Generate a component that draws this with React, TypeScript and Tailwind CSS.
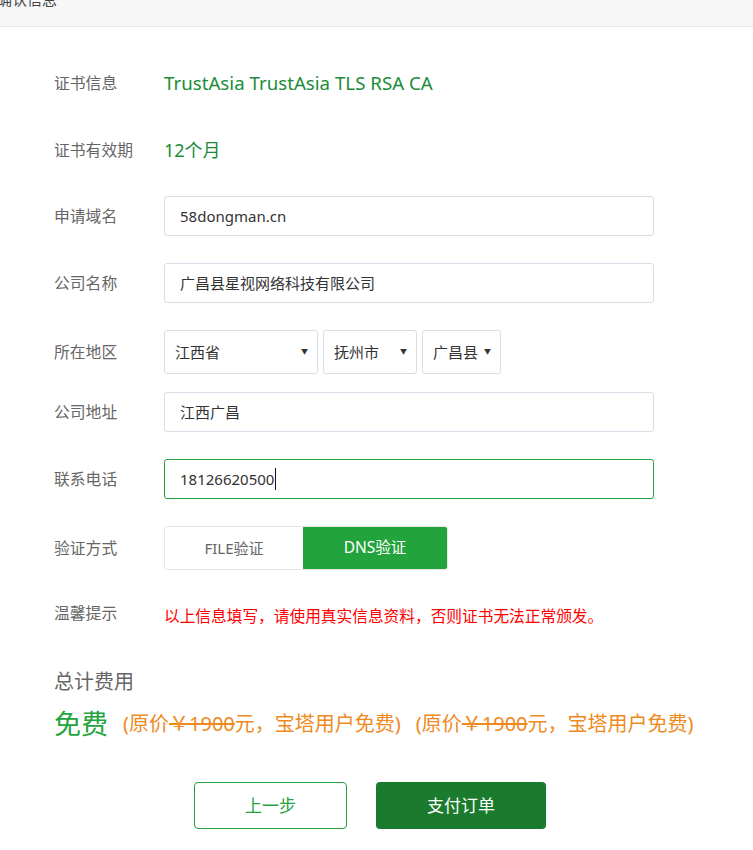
const font = "font-['Noto_Sans','Noto_Sans_CJK_SC',sans-serif]";

function Label({ children }: { children: React.ReactNode }) {
  return <div className="w-[110px] shrink-0 text-[15.8px] leading-[23px] text-[#666]">{children}</div>;
}

function Input({ value, active = false }: { value: string; active?: boolean }) {
  return (
    <div
      className={`flex h-[40px] w-[490px] items-center rounded-[3px] border px-[15px] text-[15px] text-[#333] ${
        active ? "border-[#22a33c]" : "border-[#dcdbe8]"
      }`}
    >
      <span className={active ? "border-r border-[#111] pr-px" : ""}>{value}</span>
    </div>
  );
}

function Select({ value, width }: { value: string; width: string }) {
  return (
    <div
      className={`flex h-[44px] items-center justify-between rounded-[3px] border border-[#dcdbe8] pl-[10px] pr-[9px] text-[15px] text-[#333] ${width}`}
    >
      <span>{value}</span>
      <span className="text-[7px] text-[#333]">▼</span>
    </div>
  );
}

function Price() {
  return (
    <span className="text-[20px] text-[#ee8a1e]">
      (原价<span className="line-through">￥1900</span>元，宝塔用户免费)
    </span>
  );
}

export default function App() {
  return (
    <div className={`min-h-[850px] w-[753px] bg-white ${font}`}>
      <div className="h-[27px] overflow-hidden border-b border-[#e8e8e8] bg-[#f7f7f7]">
        <div className="-ml-[3px] -mt-[11px] text-[15px] leading-[20px] text-[#444]">确认信息</div>
      </div>

      <div className="flex flex-col pl-[54px] pt-[36px]">
        <div className="flex h-[40px] items-center">
          <Label>证书信息</Label>
          <div className="text-[18.7px] text-[#208c3a]">TrustAsia TrustAsia TLS RSA CA</div>
        </div>

        <div className="mt-[27px] flex h-[40px] items-center">
          <Label>证书有效期</Label>
          <div className="text-[18px] text-[#208c3a]">12个月</div>
        </div>

        <div className="mt-[26px] flex h-[40px] items-center">
          <Label>申请域名</Label>
          <Input value="58dongman.cn" />
        </div>

        <div className="mt-[27px] flex h-[40px] items-center">
          <Label>公司名称</Label>
          <Input value="广昌县星视网络科技有限公司" />
        </div>

        <div className="mt-[27px] flex h-[44px] items-center">
          <Label>所在地区</Label>
          <div className="flex gap-[5px]">
            <Select value="江西省" width="w-[154px]" />
            <Select value="抚州市" width="w-[94px]" />
            <Select value="广昌县" width="w-[79px]" />
          </div>
        </div>

        <div className="mt-[18px] flex h-[40px] items-center">
          <Label>公司地址</Label>
          <Input value="江西广昌" />
        </div>

        <div className="mt-[27px] flex h-[40px] items-center">
          <Label>联系电话</Label>
          <Input value="18126620500" active />
        </div>

        <div className="mt-[27px] flex h-[44px] items-center">
          <Label>验证方式</Label>
          <div className="flex h-[44px] overflow-hidden rounded-[3px] border border-[#e5e5e5]">
            <div className="flex w-[138px] items-center justify-center bg-white text-[15px] text-[#666]">FILE验证</div>
            <div className="flex w-[144px] items-center justify-center bg-[#22a33c] text-[15.5px] text-white">DNS验证</div>
          </div>
        </div>

        <div className="mt-[27px] flex h-[34px] items-start pt-[5px]">
          <Label>温馨提示</Label>
          <div className="pt-[3px] text-[15.7px] leading-[23px] text-[#ff0000]">
            以上信息填写，请使用真实信息资料，否则证书无法正常颁发。
          </div>
        </div>

        <div className="mt-[39px] text-[20px] leading-[24px] text-[#666]">总计费用</div>

        <div className="mt-[12px] flex h-[36px] items-center gap-[15px]">
          <span className="text-[27px] leading-[36px] text-[#22a33c]">免费</span>
          <Price />
          <Price />
        </div>
      </div>

      <div className="mt-[40px] flex gap-[29px] pl-[194px]">
        <button className="flex h-[47px] w-[153px] items-center justify-center rounded-[4px] border border-[#22a33c] text-[17px] text-[#22a33c]">
          上一步
        </button>
        <button className="flex h-[47px] w-[170px] items-center justify-center rounded-[4px] bg-[#1a7a2e] text-[17px] text-white">
          支付订单
        </button>
      </div>
    </div>
  );
}
